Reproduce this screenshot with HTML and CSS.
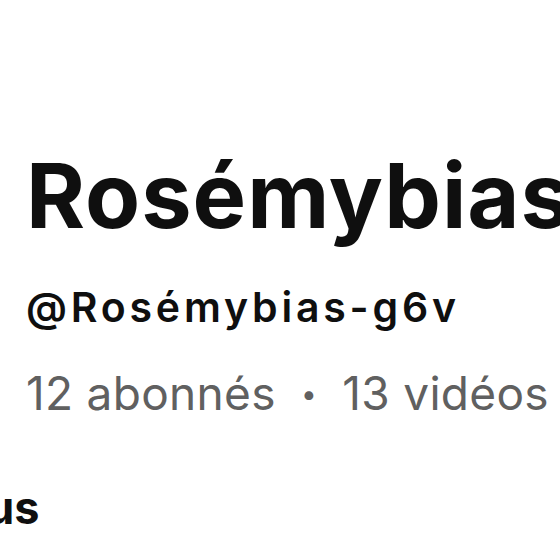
FILE: index.html
```html
<!DOCTYPE html>
<html lang="fr">
<head>
    <meta charset="UTF-8">
    <title>Rosémybias</title>
    <link rel="stylesheet" href="styles.css">
</head>
<body>
    <div class="channel">
        <h1 class="channel-name">Rosémybias</h1>
        <div class="channel-handle">@Rosémybias-g6v</div>
        <div class="channel-stats">12 abonnés <span class="dot">•</span> 13 vidéos</div>
    </div>
    <div class="tabs">
        <span class="tab">Plus</span>
    </div>
</body>
</html>
```

FILE: styles.css
```css
/* Page */
body {
    font-family: 'Inter', 'Noto Sans', sans-serif;
    background-color: #ffffff;
    color: #0f0f0f;
    margin: 0;
    overflow: hidden;
    white-space: nowrap;
}

/* En-tete de la chaine */
.channel {
    padding: 142px 0 0 26px;
}

.channel-name {
    font-size: 90px;
    font-weight: 700;
    letter-spacing: 1px;
    line-height: 108px;
    margin: 0;
}

.channel-handle {
    font-size: 41px;
    font-weight: 600;
    letter-spacing: 3.8px;
    line-height: 50px;
    margin-top: 32px;
}

.channel-stats {
    font-size: 46px;
    font-weight: 400;
    letter-spacing: 0.3px;
    color: #606060;
    line-height: 56px;
    margin-top: 33px;
}

.dot {
    font-size: 28px;
    vertical-align: 6px;
    margin: 0 12px;
}

/* Onglets */
.tabs {
    margin-top: 59px;
    margin-left: -55px;
}

.tab {
    font-size: 45px;
    font-weight: 700;
    line-height: 54px;
}
```
